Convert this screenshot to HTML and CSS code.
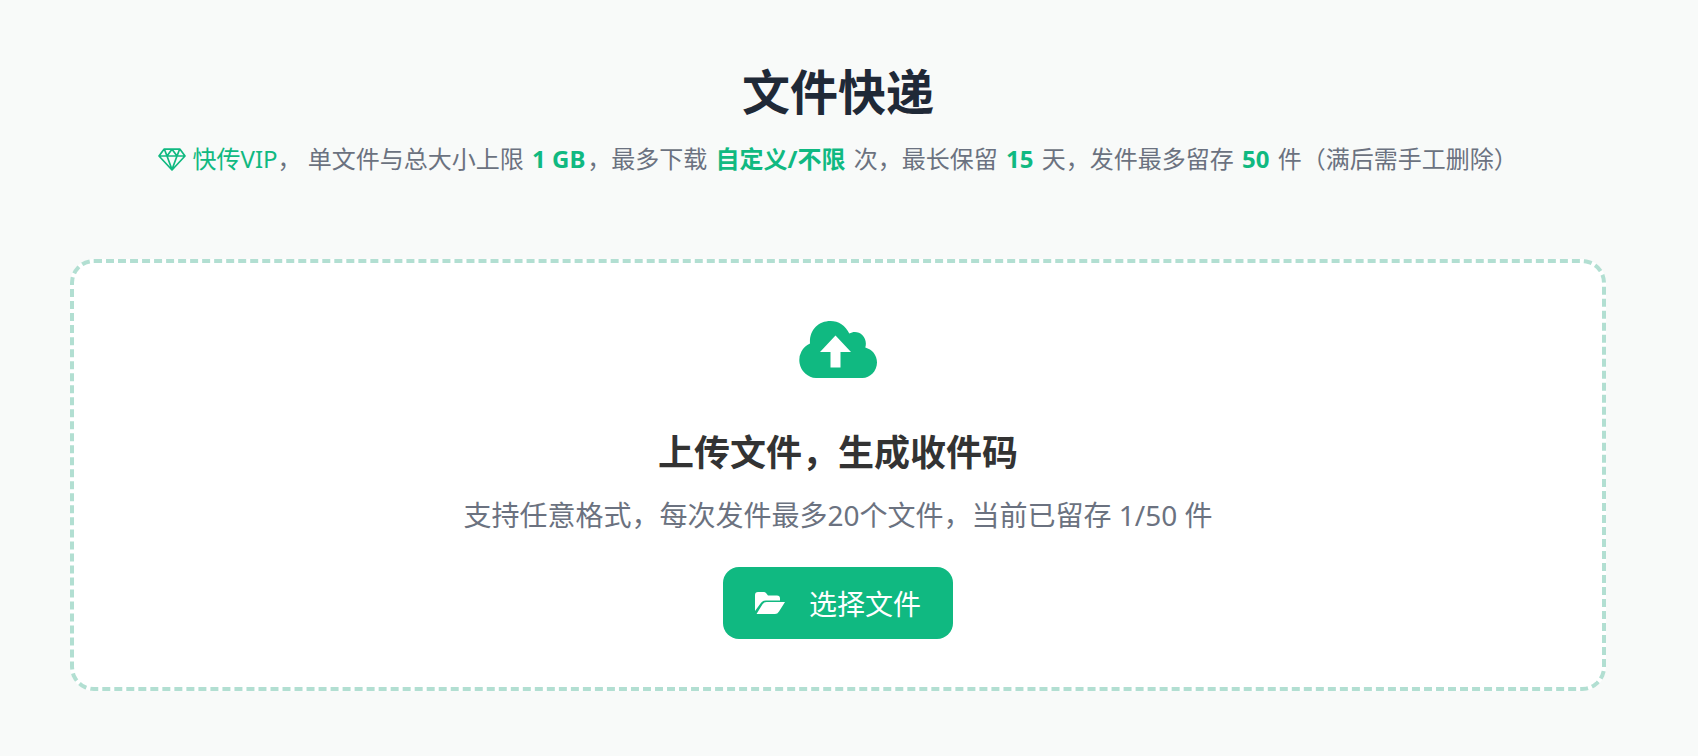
FILE: index.html
```html
<!DOCTYPE html>
<html lang="zh-CN">
<head>
  <meta charset="UTF-8">
  <meta name="viewport" content="width=device-width, initial-scale=1.0">
  <title>文件快递</title>
  <link rel="stylesheet" href="styles.css">
</head>
<body>
  <header class="header">
    <h1>文件快递</h1>
    <p class="limits">
      <span class="vip"><svg class="icon-gem" viewBox="0 0 28 23" stroke-width="1.7" aria-hidden="true"><path d="M6 1.200h16l5 6.800L14 22 1 8zM1 8h26M6.500 1.500 9 8l5 13.500L19 8l2.500-6.500M9 8l5-6.800L19 8"/></svg> 快传VIP</span>，
      单文件与总大小上限 <strong>1 GB</strong>，最多下载 <strong>自定义/不限</strong> 次，最长保留 <strong>15</strong> 天，发件最多留存 <strong>50</strong> 件（满后需手工删除）
    </p>
  </header>

  <main class="upload">
    <svg class="icon-cloud" viewBox="0 0 78 57" aria-hidden="true"><path fill-rule="evenodd" d="M17 57A18 18 0 0 1 11 22.600C10 9.500 19 0 31.500 0 39.500 0 46.500 4.500 50.300 12.500 58.500 7.500 69.500 15 66.300 26.600 73 28.500 78 34 78 41.500 78 50 71 57 63.500 57zM36.500 14.500 21 31h10.500v15.500h10V31H52z"/></svg>
    <h2>上传文件，生成收件码</h2>
    <p class="hint">支持任意格式，每次发件最多20个文件，当前已留存 1/50 件</p>
    <button type="button" class="choose">
      <svg class="icon-folder" viewBox="0 0 30 22" aria-hidden="true"><path d="M0 19V3Q0 0 3 0H9Q10 0 11 1L13 3.500H22Q25 3.500 25 6.500V8.500H11Q7.500 8.500 5.500 11.500z"/><path d="M1.500 22 7.500 12.200Q9 10 11.500 10H30L24 19.500Q22.500 22 20 22z"/></svg>
      选择文件
    </button>
  </main>
</body>
</html>
```
FILE: styles.css
```css
* {
  box-sizing: border-box;
}

body {
  margin: 0;
  padding: 56px 92px 56px 70px;
  font-family: "Noto Sans", "Noto Sans CJK SC", sans-serif;
  background-color: #f8faf9;
  color: #333;
  text-align: center;
}

h1, h2, p {
  margin: 0;
}

.header {
  margin-bottom: 81px;
}

h1 {
  margin-bottom: 12px;
  font-size: 48px;
  line-height: 72px;
  color: #1f2937;
}

.limits {
  font-size: 24px;
  line-height: 38px;
  color: #6b7280;
}

.vip,
.limits strong {
  color: #10b981;
}

.limits strong {
  margin: 0 2px;
}

.icon-gem {
  width: 28px;
  height: 23px;
  vertical-align: -3px;
  fill: none;
  stroke: currentColor;
  stroke-linejoin: round;
}

.upload {
  display: flex;
  flex-direction: column;
  align-items: center;
  padding: 58px 24px 48px;
  border: 4px dashed #b2dfd2;
  border-radius: 24px;
  background-color: #fff;
}

.icon-cloud {
  width: 78px;
  height: 57px;
  margin-bottom: 47px;
  fill: #10b981;
}

h2 {
  margin-bottom: 12px;
  font-size: 36px;
  line-height: 56px;
}

.hint {
  margin-bottom: 30px;
  font-size: 28px;
  line-height: 44px;
  color: #6b7280;
}

.choose {
  display: flex;
  align-items: center;
  gap: 24px;
  height: 72px;
  padding: 0 32px;
  border: none;
  border-radius: 16px;
  background-color: #10b981;
  color: #fff;
  font-family: inherit;
  font-size: 28px;
  cursor: pointer;
}

.icon-folder {
  width: 30px;
  height: 22px;
  fill: currentColor;
}
```
